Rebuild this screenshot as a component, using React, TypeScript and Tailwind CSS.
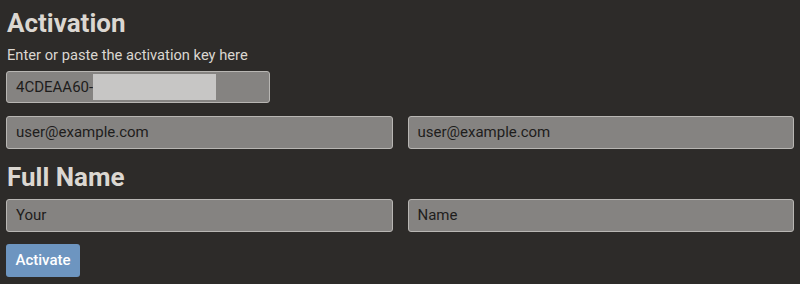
import { ReactNode } from "react"

function Field({ children, className = "" }: { children?: ReactNode; className?: string }) {
  return (
    <div
      className={
        "h-[33px] flex items-center rounded-[3px] border border-[#b8b6b3] bg-[#858381] px-[9px] text-[15px] text-[#1e1d1c] " +
        className
      }
    >
      {children}
    </div>
  )
}

export default function App() {
  return (
    <div
      className="w-[800px] h-[284px] bg-[#2d2b29] px-[6px] pt-[6px] overflow-hidden"
      style={{ fontFamily: "Roboto, 'Noto Sans', sans-serif" }}
    >
      {/* Activation key */}
      <h1 className="text-[26px] font-bold leading-[34px] text-[#dbd7d1] pl-[1px]">Activation</h1>
      <p className="mt-[5px] text-[14.7px] leading-[20px] text-[#dbd7d1] pl-[1px]">
        Enter or paste the activation key here
      </p>
      <Field className="mt-[6px] w-[264px] !h-[32px]">
        <span>4CDEAA60-</span>
        <span className="h-[26px] w-[123px] bg-[#c7c6c5]" />
      </Field>

      {/* Emails */}
      <div className="mt-[13px] grid grid-cols-2 gap-[15px]">
        <Field>user@example.com</Field>
        <Field>user@example.com</Field>
      </div>

      {/* Full name */}
      <h2 className="mt-[11px] text-[26px] font-bold leading-[34px] text-[#dbd7d1] pl-[1px]">Full Name</h2>
      <div className="mt-[5px] grid grid-cols-2 gap-[15px]">
        <Field>Your</Field>
        <Field>Name</Field>
      </div>

      <button className="mt-[12px] h-[33px] w-[74px] rounded-[3px] bg-[#6d95c0] text-[15px] font-medium text-white">
        Activate
      </button>
    </div>
  )
}
